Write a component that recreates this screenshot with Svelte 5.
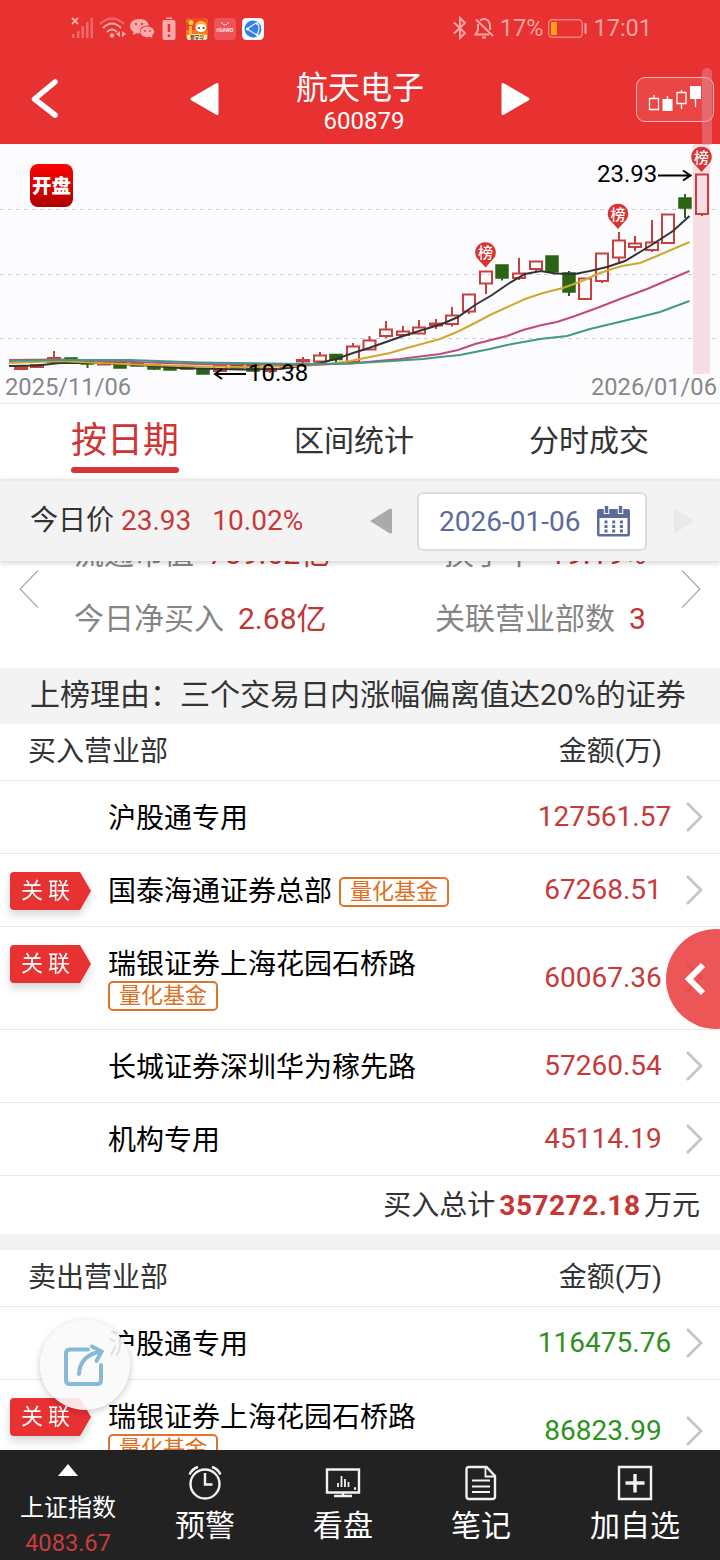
<script lang="ts">
    type Seat = { name: string; amount: string; linked?: boolean; tag?: string; wrap?: boolean };

    let activeTab = $state(0);

    const tabs = ["按日期", "区间统计", "分时成交"];

    const buyers: Seat[] = [
        { name: "沪股通专用", amount: "127561.57" },
        { name: "国泰海通证券总部", amount: "67268.51", linked: true, tag: "量化基金" },
        { name: "瑞银证券上海花园石桥路", amount: "60067.36", linked: true, tag: "量化基金", wrap: true },
        { name: "长城证券深圳华为稼先路", amount: "57260.54" },
        { name: "机构专用", amount: "45114.19" },
    ];

    const sellers: Seat[] = [
        { name: "沪股通专用", amount: "116475.76" },
        { name: "瑞银证券上海花园石桥路", amount: "86823.99", linked: true, tag: "量化基金", wrap: true },
    ];

    // x, high, body top, body bottom, low, rising
    const candles = [
        [21, 223, 223, 225, 225, 1],
        [37, 221, 221, 223, 224, 1],
        [54, 207, 214, 218, 218, 1],
        [71, 214, 214, 219, 219, 0],
        [87.5, 217, 217, 220, 224, 0],
        [104, 217, 218.5, 220.5, 221, 1],
        [120, 218, 218, 224, 224, 0],
        [137, 219, 219, 222, 222, 0],
        [154, 221, 221, 225, 226, 0],
        [170, 223, 223, 226, 226, 0],
        [187, 222, 223, 225, 225, 0],
        [203, 225, 225, 230, 230, 0],
        [220, 221, 222, 227, 227, 1],
        [237, 220, 220, 224, 224, 0],
        [253, 220, 220, 227, 227, 0],
        [270, 224, 225, 227, 229, 1],
        [286.5, 221, 222, 224, 225, 1],
        [303, 213, 216, 217.5, 219, 1],
        [320, 208, 211.5, 217.5, 218, 1],
        [336, 210, 210.5, 215.5, 219, 0],
        [353, 199, 202.5, 218, 218, 1],
        [369.5, 192, 196.5, 205.5, 206, 1],
        [386, 177, 185.5, 192, 194, 1],
        [403, 182, 187.5, 191, 191, 1],
        [419, 176, 183.5, 189.5, 190, 1],
        [436, 175, 179.5, 181.5, 185, 1],
        [452, 163, 171.5, 180, 182.5, 1],
        [469, 150, 150.5, 167.5, 170, 1],
        [486, 127, 127.5, 139.5, 150, 1],
        [502, 121, 121, 134, 136.5, 0],
        [519, 114, 129.5, 134, 136, 1],
        [536, 117, 117.5, 125, 128, 1],
        [552, 112, 112, 128, 128, 0],
        [569, 127, 129, 148, 152, 0],
        [585, 134, 134.5, 155, 155, 1],
        [602, 109, 109.5, 137, 139, 1],
        [619, 88, 96.5, 113.5, 119, 1],
        [635, 92, 99.5, 103, 107, 1],
        [652, 76, 98.5, 106, 108, 1],
        [668, 70, 70.5, 99, 99, 1],
        [685, 50, 54, 64, 74, 0],
        [702, 30, 30.5, 70, 72, 1],
    ];

    const averages = [
        { color: "#333", points: "9,222 37,221.5 60,219 100,219 140,221 180,224 240,225.5 280,225 320,219 336,215 353,209 369,204 386,198 403,192 419,187 442,180 458,173 475,161 492,151 508,140 525,130 541,127 555,129.5 575,130 590,127 607,123 625,117 640,108 653,100 673,87 689.5,72" },
        { color: "#d0a82e", points: "9,219 60,217 100,219 150,221 200,222.5 250,223 300,222 330,220 350,217 390,209 407,204 440,195 457,188 475,179 490,171 525,155 543,149 563,144 582,137 600,129 612,125 622,122 640,119 657,112 689.5,98" },
        { color: "#c04a80", points: "9,216 60,215.5 100,217 200,220 300,221 350,219.5 367,218 400,215 440,210 458,206 475,200 507,192 523,186 542,181 557,178 575,172 597,164 620,155 647,145 689.5,127" },
        { color: "#429a82", points: "9,217 60,216 130,216 200,218.5 300,220 350,219.5 400,216.5 423,215 440,213 460,211 490,205 507,201 540,195 567,192 590,185 640,173 660,168 689.5,157" },
    ];

    const pins = [[485.5, 108.5], [618, 70], [701.5, 13]];
</script>

<svelte:head>
    <title>航天电子 600879</title>
</svelte:head>

{#snippet seatRow(seat: Seat, kind: string)}
    <li class="seat" class:tall={seat.wrap}>
        <div class="relation">
            {#if seat.linked}
                <span class="flag">关联</span>
            {/if}
        </div>
        <div class="seat-name" class:stack={seat.wrap}>
            <span>{seat.name}</span>
            {#if seat.tag}
                <span class="fund">{seat.tag}</span>
            {/if}
        </div>
        <span class="amount {kind}" class:wide={seat.amount.length > 8}>{seat.amount}</span>
        <svg class="chevron" width="20" height="32" viewBox="0 0 20 32">
            <path d="M2 2 L16 16 L2 30" />
        </svg>
    </li>
{/snippet}

<div class="screen">
    <header>
        <div class="status">
            <svg width="200" height="26" viewBox="0 0 200 26">
                <g class="dim">
                    <rect x="2" y="19" width="2.5" height="4" />
                    <rect x="7" y="16" width="2.5" height="7" />
                    <rect x="11.5" y="11" width="2.5" height="12" />
                    <rect x="16" y="7" width="2.5" height="16" />
                    <rect x="20.5" y="3" width="2.5" height="20" />
                </g>
                <path class="line" d="M2 3 L8 9 M8 3 L2 9" />
                <path class="line faint" d="M30 9 Q42 -2 54 9" />
                <path class="line" d="M33 13 Q42 4 51 13 M37 17 Q42 12 47 17" />
                <circle cx="42" cy="20.5" r="2.2" class="lit" />
                <path class="lit" d="M50 16 v6 l-4 -3z M52 16 v6 l4 -3z" />
                <path class="lit" d="M69.5 4 C63 4 60 7.5 60 11 C60 14 62 16 63.5 17 L63 20 L66.5 18.2 L70 18.5 C69 13 73 10 79 10.5 C78 6 74 4 69.5 4 Z" />
                <path class="lit" d="M77 11.5 C73 11.5 70.5 14 70.5 17 C70.5 20 73 22.2 77 22.2 L79.5 21.8 L82.5 23 L82 20.5 C84 19 84.5 17 84 15.5 C83 13 80 11.5 77 11.5 Z" />
                <g fill="#e8403f">
                    <circle cx="66" cy="9" r="1.2" />
                    <circle cx="72" cy="9" r="1.2" />
                    <circle cx="75" cy="16" r="1" />
                    <circle cx="80" cy="16" r="1" />
                </g>
                <path class="lit" d="M96 4 h6 v-1.5 h-6z" />
                <rect class="lit" x="92.5" y="5" width="13" height="20" rx="2" />
                <path stroke="#e83232" stroke-width="2.5" d="M99 9 V17 M99 19.5 V22" />
                <rect x="116" y="3" width="22" height="22" rx="4" fill="#f07a1c" />
                <path fill="#f24822" d="M120 3 h14 l4 5 v7 h-22 V9z" />
                <circle cx="121" cy="7.5" r="2.5" fill="#ffd24a" />
                <path fill="#ffb03a" d="M125 9 q6 -7 12 0 l-1 4 h-10z M119 11 h3 v8 h-3z" />
                <ellipse cx="131" cy="13" rx="5.5" ry="4" fill="#fff" />
                <circle cx="129" cy="13" r="1" fill="#6b2b10" />
                <circle cx="133.5" cy="13" r="1" fill="#6b2b10" />
                <path fill="#ffe9bb" d="M117 20 q10 -2 20 0 v3 q0 2 -3 2 h-14 q-3 0 -3 -2z" />
                <text x="127" y="24" class="app-text" fill="#5a3512" font-size="4.5">新学习</text>
                <rect x="144" y="3" width="22" height="22" rx="4" fill="#ee5358" />
                <path d="M151 7 q4 6 8 0" fill="none" stroke="#ffd5d5" />
                <text x="155" y="17" class="app-text" fill="#ffe4e4" font-size="4.5">HUAWEI</text>
                <rect x="172" y="3" width="22" height="22" rx="4.5" fill="#fff" />
                <circle cx="183" cy="14" r="8.5" fill="#3382e3" />
                <path d="M177 14 L186 8 M177 14 L187 20 M188 9 q2.5 5 -1 11" fill="none" stroke="#e9f3ff" stroke-width="1.2" />
                <circle cx="177.5" cy="14" r="1.5" fill="#fff" />
                <circle cx="187" cy="8.5" r="1.3" fill="#fff" />
                <circle cx="187" cy="20" r="1.3" fill="#fff" />
            </svg>
            <div class="status-right">
                <svg width="42" height="24" viewBox="0 0 42 24">
                    <path class="line" d="M1 6.5 L12 17 L7 22 V2 L12 7 L1 17.5" />
                    <path class="line" d="M23 3.5 L40 20 M25 8 V14 L22.5 18.5 H36 M27 4.5 Q31 1.5 35 4.5 Q37.5 7 37 14 M29 21.5 H33" />
                </svg>
                <span>17%</span>
                <svg width="39" height="19" viewBox="0 0 39 19">
                    <rect x="0.7" y="0.7" width="33.5" height="17.6" rx="3.5" class="line dimline" />
                    <rect x="3" y="3" width="6" height="13" fill="#ff9d1e" />
                    <rect x="36.5" y="4" width="2" height="11" rx="1" class="lit" />
                </svg>
                <span class="clock">17:01</span>
            </div>
        </div>
        <div class="title-bar">
            <svg class="back" width="30" height="40" viewBox="0 0 30 40">
                <path d="M25 3 L4.5 20 L25 36" />
            </svg>
            <svg class="prev" width="30" height="34" viewBox="0 0 30 34">
                <path d="M2 17 L27 2.5 V31.5 Z" />
            </svg>
            <div class="stock">
                <h1>航天电子</h1>
                <span>600879</span>
            </div>
            <svg class="next" width="30" height="34" viewBox="0 0 30 34">
                <path d="M28 17 L3 2.5 V31.5 Z" />
            </svg>
            <button class="kline" aria-label="K线">
                <svg width="54" height="28" viewBox="0 0 54 28">
                    <g fill="none" stroke="#fff" stroke-width="1.3">
                        <path d="M1.5 13.5 h9 v11 h-9z M6 10 v3.5" />
                        <path d="M29 7.5 h9 v11 h-9z M33.5 5 v2.5 M33.5 18.5 V24" />
                        <path d="M19.5 11 V15 M47.5 12 V22" />
                    </g>
                    <path fill="#fff" d="M14.5 14 h10 v12 h-10z M42 1 h11 v13 h-11z" />
                </svg>
            </button>
        </div>
    </header>

    <section class="chart">
        <svg width="720" height="260" viewBox="0 0 720 260">
            <g class="grid">
                <path d="M0 65.5 H720 M0 130.5 H720 M0 194.5 H720" />
            </g>
            <rect x="693" y="0" width="17" height="230" fill="#f6dee4" />
            {#each candles as [x, high, top, bottom, low, rising]}
                <g class={rising ? "rise" : "fall"}>
                    <path d="M{x} {high} V{top} M{x} {bottom} V{low}" />
                    <rect x={x - 6} y={top} width="12" height={bottom - top} />
                </g>
            {/each}
            {#each averages as line}
                <polyline points={line.points} stroke={line.color} />
            {/each}
            <path class="arrow" d="M246 230 H216 M222 225 L215 230 L222 235" />
            <text x="248" y="237" class="mark">10.38</text>
            <text x="597" y="38" class="mark">23.93</text>
            <path class="arrow" d="M658 31.5 H690 M683 26.5 L690.5 31.5 L683 36.5" />
            {#each pins as [x, y]}
                <path class="pin" d="M{x - 9} {y + 5} L{x} {y + 15} L{x + 9} {y + 5} A10.3 10.3 0 1 0 {x - 9} {y + 5}" />
                <text {x} y={y + 5.5} class="pin-text">榜</text>
            {/each}
            <text x="5" y="251" class="date">2025/11/06</text>
            <text x="717" y="251" class="date end">2026/01/06</text>
        </svg>
        <div class="logo">开盘</div>
    </section>

    <nav class="tabs">
        {#each tabs as tab, i}
            <button class:active={activeTab === i} onclick={() => (activeTab = i)}>{tab}</button>
        {/each}
    </nav>

    <div class="day-bar">
        <span class="label">今日价</span>
        <span class="price">23.93</span>
        <span class="change">10.02%</span>
        <svg class="day-prev" width="22" height="28" viewBox="0 0 22 28">
            <path d="M0 14 L20 1.5 Q22 1 22 3 V25 Q22 27 20 26.5 Z" fill="#aaa" />
        </svg>
        <button class="date-box">
            2026-01-06
            <svg width="33" height="31" viewBox="0 0 33 31">
                <path fill="#5b6c9c" fill-rule="evenodd" d="M2 3 H31 Q33 3 33 5 V28 Q33 30.5 31 30.5 H2 Q0 30.5 0 28 V5 Q0 3 2 3 Z M2.5 12 V28 H30.5 V12 Z" />
                <path stroke="#fff" stroke-width="5.5" d="M9.5 0 V8 M23.5 0 V8" />
                <path stroke="#5b6c9c" stroke-width="3.5" d="M9.5 0 V7 M23.5 0 V7" />
                <path stroke="#5b6c9c" stroke-width="3" stroke-dasharray="3 4.7" d="M7.5 16 H27 M7.5 20.5 H27 M7.5 25 H27" />
            </svg>
        </button>
        <svg class="day-next" width="22" height="28" viewBox="0 0 22 28">
            <path d="M21 14 L1 1 V27 Z" fill="#e9e9e9" />
        </svg>
    </div>

    <main>
        <section class="stats">
            <svg width="20" height="38" viewBox="0 0 20 38"><path d="M19 0.5 L1 19 L19 37.5" /></svg>
            <div class="stat-rows">
                <div class="stat-row">
                    <p>流通市值<b>789.62亿</b></p>
                    <p class="right">换手率<b class="far">19.19%</b></p>
                </div>
                <div class="stat-row">
                    <p>今日净买入<b>2.68亿</b></p>
                    <p class="right">关联营业部数<b>3</b></p>
                </div>
            </div>
            <svg width="20" height="38" viewBox="0 0 20 38"><path d="M1 0.5 L19 19 L1 37.5" /></svg>
        </section>

        <h2>上榜理由：三个交易日内涨幅偏离值达20%的证券</h2>

        <div class="table-head">
            <span>买入营业部</span>
            <span>金额(万)</span>
        </div>
        <ul>
            {#each buyers as seat}
                {@render seatRow(seat, "buy")}
            {/each}
        </ul>
        <p class="total">买入总计<strong>357272.18</strong>万元</p>

        <div class="table-head">
            <span>卖出营业部</span>
            <span>金额(万)</span>
        </div>
        <ul>
            {#each sellers as seat}
                {@render seatRow(seat, "sell")}
            {/each}
        </ul>
    </main>

    <footer>
        <div class="index">
            <svg width="20" height="12" viewBox="0 0 20 12"><path d="M10 0 L20 12 H0 Z" fill="#fff" /></svg>
            <span>上证指数</span>
            <span class="index-value">4083.67</span>
        </div>
        <div class="tool">
            <svg width="36" height="36" viewBox="0 0 36 36">
                <circle cx="18" cy="19" r="14.5" />
                <path d="M18 8 V19.5 H25.5" />
                <path d="M2.5 9.5 Q5 4 11 2 M33.5 9.5 Q31 4 25 2" />
            </svg>
            预警
        </div>
        <div class="tool">
            <svg width="36" height="36" viewBox="0 0 36 36">
                <path d="M2 4.5 H34 V27.5 H2 Z" />
                <path class="thin" d="M13 18 V22 M16.5 11 V22 M20 14 V22 M23.5 17 V22" />
                <path d="M29 23.5 H31 M18 28 V31 M9 31 H27" />
            </svg>
            看盘
        </div>
        <div class="tool">
            <svg width="36" height="36" viewBox="0 0 36 36">
                <path d="M6 2 H23.5 L32 11 V31.5 Q32 34 29.5 34 H6 Q3.5 34 3.5 31.5 V4.5 Q3.5 2 6 2 Z" />
                <path class="thin" d="M22.5 3 V11.5 H31" />
                <path class="thin" d="M9 15.5 H27 M9 21.5 H27 M9 27 H27" />
            </svg>
            笔记
        </div>
        <div class="tool">
            <svg width="36" height="36" viewBox="0 0 36 36">
                <path d="M2 2 H34 V34 H2 Z" />
                <path class="plus" d="M18 9 V27.5 M8.5 18 H27.5" />
            </svg>
            加自选
        </div>
    </footer>

    <div class="scroll-thumb"></div>
    <button class="drawer" aria-label="展开">
        <svg width="22" height="34" viewBox="0 0 22 34"><path d="M19 3 L5 17 L19 31" /></svg>
    </button>
    <button class="share" aria-label="分享">
        <svg width="42" height="44" viewBox="0 0 42 44">
            <path d="M25 6.5 H7 Q3 6.5 3 10.5 V37 Q3 41 7 41 H34 Q38 41 38 37 V22" />
            <path d="M16 31 Q17 13 36 9" />
            <path d="M29 3.5 L38.5 8.5 L33.5 18" />
        </svg>
    </button>
</div>

<style>
    :global(body) {
        margin: 0;
        background: #fff;
    }

    .screen {
        position: relative;
        width: 720px;
        height: 1560px;
        overflow: hidden;
        display: flex;
        flex-direction: column;
        background: #fff;
        color: #333;
        font-family: Roboto, "Noto Sans CJK SC", sans-serif;
        font-size: 28px;
        line-height: 1;
    }

    svg {
        display: block;
        flex: none;
    }

    button {
        border: 0;
        padding: 0;
        background: none;
        font: inherit;
        color: inherit;
    }

    h1, h2, p, ul {
        margin: 0;
        padding: 0;
        font-weight: 400;
    }

    header {
        height: 144px;
        flex: none;
        background: #e83131;
        color: #fff;
    }

    .status {
        height: 56px;
        box-sizing: border-box;
        display: flex;
        align-items: center;
        justify-content: space-between;
        padding: 0 68px 0 70px;
        color: #f9a5a5;
        font-size: 23.5px;
    }

    .status-right {
        display: flex;
        align-items: center;
        gap: 5px;
    }

    .status-right span {
        padding-top: 1px;
    }

    .clock {
        margin-left: 1px;
    }

    .lit {
        fill: #fba9a9;
    }

    .dim {
        fill: #ef6a6a;
    }

    .line {
        fill: none;
        stroke: #fba9a9;
        stroke-width: 1.9;
    }

    .faint {
        stroke: #ef6a6a;
    }

    .dimline {
        stroke: #f58080;
        stroke-width: 1.4;
    }

    .app-text {
        text-anchor: middle;
        font-weight: 700;
    }

    .title-bar {
        height: 88px;
        box-sizing: border-box;
        display: flex;
        align-items: center;
        padding: 0 6px 2px 30px;
    }

    .back path {
        fill: none;
        stroke: #fff;
        stroke-width: 5.5;
        stroke-linecap: round;
        stroke-linejoin: round;
    }

    .prev {
        margin-left: 130px;
    }

    .prev path,
    .next path {
        fill: #fff;
        stroke: #fff;
        stroke-width: 3;
        stroke-linejoin: round;
    }

    .stock {
        width: 280px;
        display: flex;
        flex-direction: column;
        align-items: center;
        gap: 5px;
        padding-top: 6px;
        margin-left: 4px;
        font-size: 24px;
    }

    h1 {
        margin-right: 8px;
        font-size: 32px;
    }

    .next {
        margin-left: -4px;
    }

    .kline {
        width: 78px;
        height: 45px;
        box-sizing: border-box;
        margin-left: auto;
        display: flex;
        align-items: center;
        justify-content: center;
        border: 1.5px solid #f7b5b5;
        border-radius: 9px;
        background: #ea4646;
    }

    .kline svg {
        margin: 2px 0 3px 0;
    }

    .chart {
        position: relative;
        height: 260px;
        flex: none;
        background: #fcfcff;
        box-shadow: inset 0 -1px #e8e8ea;
    }

    .grid path {
        stroke: #ccced6;
        stroke-dasharray: 4 4;
    }

    .rise {
        fill: none;
        stroke: #c5403f;
        stroke-width: 2;
    }

    .fall {
        fill: #2d6314;
        stroke: #2d6314;
        stroke-width: 2;
    }

    .fall rect {
        stroke-width: 1.5;
    }

    polyline {
        fill: none;
        stroke-width: 2;
    }

    .arrow {
        fill: none;
        stroke: #000;
        stroke-width: 2;
    }

    .mark {
        font-size: 24px;
        fill: #000;
    }

    .pin {
        fill: #d93434;
    }

    .pin-text {
        font-size: 15px;
        font-weight: 500;
        fill: #fff;
        text-anchor: middle;
    }

    .date {
        font-size: 23.7px;
        fill: #888;
    }

    .end {
        text-anchor: end;
    }

    .logo {
        position: absolute;
        left: 30px;
        top: 20px;
        width: 43px;
        height: 43px;
        border-radius: 8px;
        background: linear-gradient(#fb0303, #b00000);
        color: #fff;
        font-size: 19.5px;
        font-weight: 900;
        line-height: 45px;
        text-align: center;
    }

    .tabs {
        height: 75px;
        flex: none;
        display: grid;
        grid-template-columns: 250px 208px 262px;
        justify-items: center;
    }

    .tabs button {
        height: 69px;
        box-sizing: border-box;
        padding-top: 10px;
        font-size: 30px;
        border-bottom: 6px solid transparent;
    }

    .tabs .active {
        position: relative;
        color: #cf3535;
        font-size: 36px;
    }

    .tabs .active::after {
        content: "";
        position: absolute;
        left: 0;
        right: 0;
        bottom: -6px;
        height: 6px;
        border-radius: 3px;
        background: #d93535;
    }

    .day-bar {
        position: relative;
        z-index: 1;
        height: 82px;
        box-sizing: border-box;
        flex: none;
        display: flex;
        align-items: center;
        padding: 0 25px 0 30px;
        background: #f3f3f3;
        border-top: 2px solid #ebebeb;
        box-shadow: 0 2px 6px rgba(0, 0, 0, 0.18);
    }

    .price {
        margin: 0 21px 0 7px;
        color: #c73a3a;
    }

    .change {
        color: #c73a3a;
    }

    .day-prev {
        margin-left: auto;
        margin-right: 25px;
    }

    .date-box {
        width: 230px;
        height: 59px;
        box-sizing: border-box;
        display: flex;
        align-items: center;
        justify-content: space-between;
        padding: 1px 15px 0 20px;
        border: 2px solid #dcdcdc;
        border-radius: 6px;
        background: #fff;
        color: #5b6c9c;
    }

    .day-next {
        margin-left: 26px;
    }

    main {
        flex: 1;
        min-height: 0;
        overflow: hidden;
    }

    .stats {
        height: 107px;
        box-sizing: border-box;
        overflow: hidden;
        display: flex;
        align-items: flex-end;
        justify-content: space-between;
        padding: 0 19px 17px;
        color: #858585;
        font-size: 30px;
        white-space: nowrap;
    }

    .stats svg {
        margin-bottom: 43px;
    }

    .stats path {
        fill: none;
        stroke: #aaa;
        stroke-width: 1.2;
    }

    .stat-rows {
        width: 572px;
    }

    .stat-row {
        height: 65px;
        display: flex;
        align-items: center;
        justify-content: space-between;
    }

    .right {
        width: 211px;
    }

    .stats b {
        margin-left: 14px;
        color: #c23636;
        font-weight: 400;
    }

    .stats .far {
        margin-left: 15px;
    }

    .stat-row:first-child .right {
        width: 202px;
    }

    h2 {
        height: 56px;
        padding-left: 30px;
        background: #f3f3f3;
        font-size: 30px;
        line-height: 54px;
        white-space: nowrap;
    }

    .table-head {
        height: 57px;
        box-sizing: border-box;
        display: flex;
        align-items: center;
        justify-content: space-between;
        padding: 0 58px 0 28px;
        border-bottom: 1px solid #e8e8e8;
    }

    ul {
        list-style: none;
    }

    .seat {
        height: 73px;
        box-sizing: border-box;
        display: flex;
        align-items: center;
        padding-right: 15px;
        border-bottom: 1px solid #e8e8e8;
        color: #000;
    }

    .tall {
        height: 103px;
    }

    .relation {
        width: 98px;
        padding: 18px 0 0 10px;
        align-self: flex-start;
        filter: drop-shadow(0 5px 4px rgba(0, 0, 0, 0.16));
    }

    .flag {
        display: block;
        width: 81px;
        height: 38px;
        box-sizing: border-box;
        padding-left: 11px;
        border-radius: 4px;
        background: #e83131;
        clip-path: polygon(0 0, 70px 0, 100% 50%, 70px 100%, 0 100%);
        color: #fff;
        font-size: 22px;
        line-height: 37px;
        letter-spacing: 5px;
    }

    .seat-name {
        flex: 1;
        display: flex;
        align-items: center;
        gap: 7px;
        padding-top: 4px;
    }

    .stack {
        flex-direction: column;
        align-items: flex-start;
        gap: 2px;
        padding-top: 5px;
    }

    .fund {
        height: 30px;
        box-sizing: border-box;
        padding: 0 9px;
        border: 2px solid #e07428;
        border-radius: 5px;
        color: #dd6f22;
        font-size: 22px;
        line-height: 25px;
    }

    .amount {
        width: 150px;
        margin-right: 7px;
        text-align: center;
    }

    .wide {
        box-sizing: border-box;
        padding-left: 3px;
    }

    .buy {
        color: #c53b3b;
    }

    .sell {
        color: #2f9121;
    }

    .chevron path {
        fill: none;
        stroke: #c5c5c5;
        stroke-width: 2.8;
    }

    .total {
        height: 58px;
        padding-right: 20px;
        border-bottom: 16px solid #f3f3f3;
        line-height: 60px;
        text-align: right;
    }

    .total strong {
        margin: 0 3.5px 0 4px;
        color: #c73535;
        letter-spacing: 0.5px;
    }

    footer {
        height: 110px;
        flex: none;
        display: grid;
        grid-template-columns: 136px 138px 138px 138px 170px;
        background: #222;
        color: #fff;
    }

    .index {
        display: flex;
        flex-direction: column;
        align-items: center;
        padding-top: 14px;
        font-size: 24px;
    }

    .index span {
        margin-top: 20px;
    }

    .index .index-value {
        margin-top: 12px;
        color: #c93c3c;
        font-size: 23.6px;
    }

    .tool {
        display: flex;
        flex-direction: column;
        align-items: center;
        gap: 10px;
        padding-top: 15px;
        font-size: 30px;
    }

    .tool path,
    .tool circle {
        fill: none;
        stroke: #f2f2f2;
        stroke-width: 2.4;
    }

    .tool .thin {
        stroke-width: 1.8;
    }

    .tool .plus {
        stroke-width: 3.4;
    }

    .scroll-thumb {
        position: absolute;
        left: 702px;
        top: 68px;
        width: 10px;
        height: 77px;
        border-radius: 5px 5px 0 0;
        background: rgba(225, 150, 165, 0.45);
    }

    .drawer {
        position: absolute;
        left: 666px;
        top: 929px;
        width: 100px;
        height: 100px;
        padding-left: 18px;
        border-radius: 50%;
        background: rgba(232, 49, 49, 0.82);
    }

    .drawer path {
        fill: none;
        stroke: #fff;
        stroke-width: 6;
    }

    .share {
        position: absolute;
        left: 40px;
        top: 1320px;
        width: 90px;
        height: 90px;
        padding-left: 23px;
        border-radius: 50%;
        background: rgba(250, 250, 250, 0.9);
        box-shadow: 0 2px 7px rgba(0, 0, 0, 0.22);
    }

    .share path {
        fill: none;
        stroke: #86b9d4;
        stroke-width: 4;
        stroke-linecap: round;
    }
</style>
